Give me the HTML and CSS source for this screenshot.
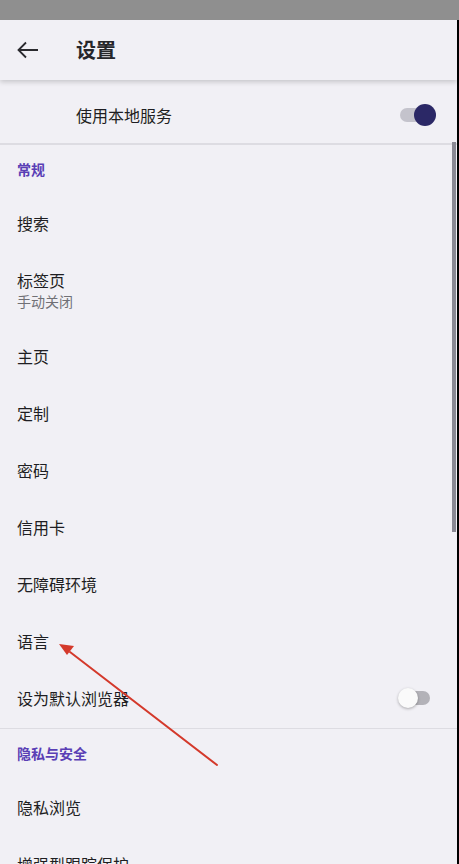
FILE: index.html
```html
<!DOCTYPE html>
<html>
<head>
  <meta charset="UTF-8">
  <title>设置</title>
  <link rel="stylesheet" href="styles.css">
</head>
<body>
  <div class="status"></div>
  <div class="screen">
    <header class="topbar">
      <span class="back">
        <svg width="22" height="18" viewBox="0 0 22 18"><path d="M21 9H2M9 1.5L1.5 9L9 16.5" fill="none" stroke="#2a2a2e" stroke-width="1.8"/></svg>
      </span>
      <h1>设置</h1>
    </header>

    <div class="row local">
      <span class="label">使用本地服务</span>
      <span class="switch on"><i></i></span>
    </div>

    <div class="section">常规</div>
    <div class="row">搜索</div>
    <div class="row double">
      <span class="label">标签页</span>
      <span class="sub">手动关闭</span>
    </div>
    <div class="row">主页</div>
    <div class="row">定制</div>
    <div class="row">密码</div>
    <div class="row">信用卡</div>
    <div class="row">无障碍环境</div>
    <div class="row">语言</div>
    <div class="row">
      <span class="label">设为默认浏览器</span>
      <span class="switch off"><i></i></span>
    </div>

    <div class="section">隐私与安全</div>
    <div class="row">隐私浏览</div>
    <div class="row">增强型跟踪保护</div>

    <div class="scrollbar"></div>

    <svg class="arrow" width="459" height="864" viewBox="0 0 459 864">
      <path d="M217 765 L70 652" stroke="#d4392b" stroke-width="2" fill="none" stroke-linecap="round"/>
      <path d="M59 644 L74 646 L67 655 Z" fill="#d4392b"/>
    </svg>
  </div>
</body>
</html>
```

FILE: styles.css
```css
body {
  margin: 0;
  background: #000;
  font-family: "Noto Sans CJK SC", "Noto Sans", sans-serif;
  color: #1e1e22;
  overflow: hidden;
}

.status {
  height: 20px;
  background: #8f8f8f;
}

.screen {
  position: relative;
  width: 457px;
  height: 844px;
  background: #f1f0f5;
  overflow: hidden;
}

.topbar {
  height: 60px;
  display: flex;
  align-items: center;
  background: #f1f0f5;
  box-shadow: 0 2px 5px rgba(0, 0, 0, 0.18);
  position: relative;
  z-index: 1;
}

.back {
  width: 77px;
  padding-left: 17px;
  box-sizing: border-box;
  display: flex;
  align-items: center;
}

.topbar h1 {
  margin: 0 0 2px -1px;
  font-size: 20px;
  font-weight: bold;
  color: #26262a;
}

.row {
  height: 57px;
  display: flex;
  align-items: center;
  padding: 0 17px 4px;
  box-sizing: border-box;
  font-size: 16px;
}

.row .label {
  flex: 1;
}

.row.local {
  height: 64px;
  padding-left: 76px;
  padding-top: 6px;
  padding-bottom: 0;
  border-bottom: 1px solid #dddce2;
}

.row.double {
  height: 76px;
  flex-direction: column;
  align-items: flex-start;
  justify-content: center;
  padding-top: 0;
  padding-bottom: 2px;
}

.row.double .label {
  flex: none;
  line-height: 22px;
}

.sub {
  font-size: 14px;
  color: #707075;
  line-height: 20px;
}

.section {
  height: 52px;
  display: flex;
  align-items: center;
  padding: 0 17px 4px;
  box-sizing: border-box;
  font-size: 14px;
  font-weight: bold;
  color: #5a3fb5;
}

.row + .section {
  border-top: 1px solid #dddce2;
}

.switch {
  position: relative;
  width: 32px;
  height: 14px;
  border-radius: 7px;
  margin-right: 6px;
}

.switch i {
  position: absolute;
  top: 50%;
  width: 22px;
  height: 22px;
  border-radius: 50%;
  transform: translateY(-50%);
}

.switch.on {
  background: #c4c3cc;
  margin-right: 8px;
}

.switch.on i {
  right: -4px;
  background: #2b2866;
}

.switch.off {
  background: #b3b2b8;
  width: 28px;
  margin-right: 10px;
}

.switch.off i {
  left: -4px;
  width: 20px;
  height: 20px;
  background: #fafafa;
  box-shadow: 0 1px 3px rgba(0, 0, 0, 0.3);
}

.scrollbar {
  position: absolute;
  right: 1px;
  top: 122px;
  width: 4px;
  height: 390px;
  background: #8a8994;
}

.arrow {
  position: absolute;
  left: 0;
  top: -20px;
  pointer-events: none;
}
```
